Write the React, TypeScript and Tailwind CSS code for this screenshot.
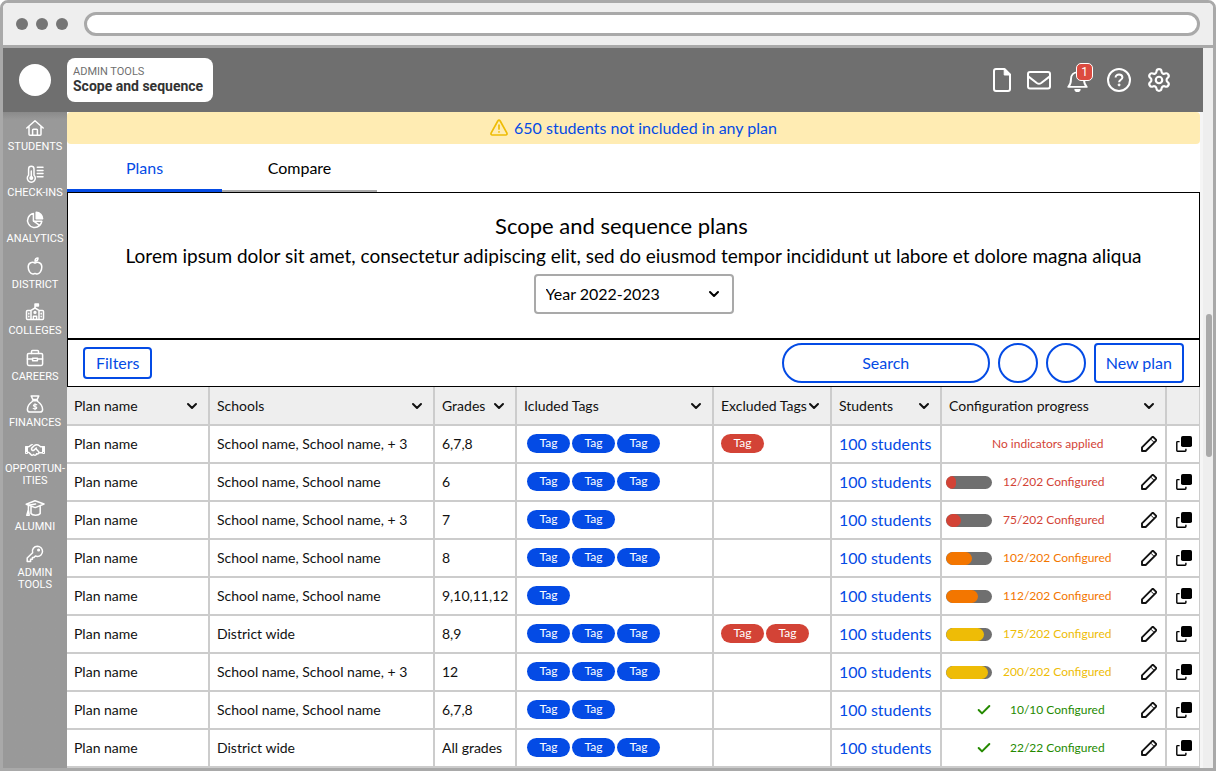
import type { ReactNode } from 'react';
import { Check, ChevronDown, Settings } from 'lucide-react';
import { FaRegHandshake } from 'react-icons/fa6';

type Progress = { label: string; tone: string; fill?: string; percent?: number; done?: boolean };

type Plan = {
  schools: string;
  grades: string;
  included: number;
  excluded: number;
  progress: Progress;
};

const RED = 'text-[#d34336]';
const ORANGE = 'text-[#f37600]';
const YELLOW = 'text-[#eebc06]';
const GREEN = 'text-[#258a00]';

const plans: Plan[] = [
  { schools: 'School name, School name, + 3', grades: '6,7,8', included: 3, excluded: 1, progress: { label: 'No indicators applied', tone: RED } },
  { schools: 'School name, School name', grades: '6', included: 3, excluded: 0, progress: { label: '12/202 Configured', tone: RED, fill: 'bg-[#d34336]', percent: 22 } },
  { schools: 'School name, School name, + 3', grades: '7', included: 2, excluded: 0, progress: { label: '75/202 Configured', tone: RED, fill: 'bg-[#d34336]', percent: 33 } },
  { schools: 'School name, School name', grades: '8', included: 3, excluded: 0, progress: { label: '102/202 Configured', tone: ORANGE, fill: 'bg-[#f37600]', percent: 57 } },
  { schools: 'School name, School name', grades: '9,10,11,12', included: 1, excluded: 0, progress: { label: '112/202 Configured', tone: ORANGE, fill: 'bg-[#f37600]', percent: 70 } },
  { schools: 'District wide', grades: '8,9', included: 3, excluded: 2, progress: { label: '175/202 Configured', tone: YELLOW, fill: 'bg-[#eebc06]', percent: 83 } },
  { schools: 'School name, School name, + 3', grades: '12', included: 3, excluded: 0, progress: { label: '200/202 Configured', tone: YELLOW, fill: 'bg-[#eebc06]', percent: 92 } },
  { schools: 'School name, School name', grades: '6,7,8', included: 2, excluded: 0, progress: { label: '10/10 Configured', tone: GREEN, done: true } },
  { schools: 'District wide', grades: 'All grades', included: 3, excluded: 0, progress: { label: '22/22 Configured', tone: GREEN, done: true } },
];

const columns = ['Plan name', 'Schools', 'Grades', 'Icluded Tags', 'Excluded Tags', 'Students', 'Configuration progress'];

const NavIcon = ({ children }: { children: ReactNode }) => (
  <svg className="h-[18px] w-5" viewBox="0 0 20 18" fill="none" stroke="currentColor" strokeWidth="1.5" strokeLinecap="round" strokeLinejoin="round" aria-hidden="true">
    {children}
  </svg>
);

const navItems = [
  {
    label: 'STUDENTS',
    icon: <NavIcon><path d="M1.8 9 10 1.8 18.2 9M4 7.4V15.2q0 1 1 1h10q1 0 1-1V7.4M7.6 16V11q0-.8.8-.8h3.2q.8 0 .8.8v5" /></NavIcon>,
  },
  {
    label: 'CHECK-INS',
    icon: (
      <NavIcon>
        <path d="M3.6 10.2V4a2.7 2.7 0 0 1 5.4 0v6.2a4 4 0 1 1-5.4 0Z" />
        <path d="M6.3 6v6" />
        <circle cx="6.3" cy="13" r="1.3" fill="currentColor" />
        <path d="M12.3 2.2H18M12.3 5.4H18M12.3 8.6H18M12.3 11.8H18" />
      </NavIcon>
    ),
  },
  {
    label: 'ANALYTICS',
    icon: (
      <NavIcon>
        <path d="M8.4 2.6A7 7 0 1 0 14.6 14.4L8.4 9.8Z" />
        <path d="M11.2 1.2a6.6 6.6 0 0 1 6.4 6.600h-6.400Z" fill="currentColor" />
        <path d="M8.600 10.300h8.200a7 7 0 0 1-2.200 4.100" />
      </NavIcon>
    ),
  },
  {
    label: 'DISTRICT',
    icon: (
      <NavIcon>
        <path d="M10 6.200C7.600 4.600 3.200 5.200 3.200 10c0 3.600 2.200 7 4.600 7 1 0 1.400-.5 2.200-.5s1.200.5 2.200.5c2.400 0 4.600-3.400 4.600-7 0-4.800-4.400-5.400-6.800-3.800Z" />
        <path d="M10 4.200c0-2 1-3.200 3-3.200 0 2-1.200 3.200-3 3.200Z" />
      </NavIcon>
    ),
  },
  {
    label: 'COLLEGES',
    icon: (
      <NavIcon>
        <path d="M10 5V1h3.400v1.900H10" fill="currentColor" />
        <path d="M6 7.400V16.400M14 7.400v9M6 7.400 10 5l4 2.400M6 7.400H2.500q-1 0-1 1v7q0 1 1 1h15q1 0 1-1v-7q0-1-1-1H14M8.400 16.400v-3.200h3.200v3.200" />
        <circle cx="10" cy="9.400" r=".9" />
        <path d="M3.800 10.300v.6M3.800 13.200v.6M16.200 10.300v.6M16.200 13.200v.6" />
      </NavIcon>
    ),
  },
  {
    label: 'CAREERS',
    icon: (
      <NavIcon>
        <rect x="2.400" y="4.400" width="15.200" height="12" rx="1.400" />
        <path d="M6.500 4.400V2.600q0-1 1-1h5q1 0 1 1v1.800M2.400 10h5.200M12.400 10h5.200M7.600 9.200h4.800v2.600H7.600Z" />
      </NavIcon>
    ),
  },
  {
    label: 'FINANCES',
    icon: (
      <NavIcon>
        <path d="M6.200 1h7.600l-1.600 3.400H7.800ZM7.400 5.800h5.200M7.800 6C4.800 8.200 2.400 11.400 2.400 14.400q0 2.600 2.800 2.600h9.600q2.800 0 2.800-2.600c0-3-2.400-6.200-5.400-8.400" />
        <path d="M11.800 9.800c-.8-.5-3.400-.7-3.400.7 0 1.500 3.400.8 3.400 2.300 0 1.400-2.600 1.300-3.600.6M10 8.600v6.200" strokeWidth="1.100" />
      </NavIcon>
    ),
  },
  { label: 'OPPORTUN-\nITIES', icon: <FaRegHandshake className="h-[18px] w-5" aria-hidden="true" /> },
  {
    label: 'ALUMNI',
    icon: (
      <NavIcon>
        <path d="m1.200 5.200 8.800-3.400 9 3.200-8.800 3.600ZM6 8v6.500c1.400 2.300 7.800 2.300 9.200 0V7.500" />
        <path d="M10.600 5 3.400 6.200v4.200M3.400 10.800l-1.600 5.400h2.400Z" />
      </NavIcon>
    ),
  },
  {
    label: 'ADMIN\nTOOLS',
    icon: (
      <NavIcon>
        <path d="M12.400 1.200a5.100 5.100 0 0 1 0 10.200c-.8 0-1.400-.1-2-.4L9 12.400H7.400v1.800H5.600V16.400H2.200V13l5.400-5.200a5.100 5.100 0 0 1 4.800-6.600Z" />
        <circle cx="13.600" cy="5" r=".8" fill="currentColor" />
      </NavIcon>
    ),
  },
];

const Pencil = () => (
  <svg className="size-4" viewBox="0 0 16 16" fill="none" stroke="#111" strokeWidth="1.900" strokeLinejoin="round" aria-hidden="true">
    <path d="M1 15v-3.700L11.200 1.100q.6-.5 1.200 0l2.500 2.500q.5.600 0 1.200L4.700 15Z" />
    <path d="m9.900 3.200 2.900 2.900" strokeWidth="1" />
  </svg>
);

const Copy = () => (
  <svg className="size-4" viewBox="0 0 16 16" aria-hidden="true">
    <path d="M3.600 5.600H1.500q-.7 0-.7.700v8.200q0 .7.700.7h7.600q.8 0 .8-.7v-1.700" fill="none" stroke="#000" strokeWidth="1.400" />
    <rect x="5" width="11" height="11" rx="1.800" />
  </svg>
);

const Tags = ({ count, color }: { count: number; color: string }) => (
  <div className="flex gap-[2px] pb-[2px]">
    {Array.from({ length: count }, (_, i) => (
      <span key={i} className={`flex h-[19px] w-[43px] items-center justify-center rounded-full text-xs text-white ${color}`}>
        Tag
      </span>
    ))}
  </div>
);

const ProgressCell = ({ progress }: { progress: Progress }) => (
  <div className="flex items-center pr-2 pl-1">
    <div className="flex w-[46px] shrink-0 justify-end">
      {progress.fill && (
        <div className="h-[13px] w-full overflow-hidden rounded-full bg-[#6f6f6f]">
          <div className={`h-full rounded-full ${progress.fill}`} style={{ width: `${progress.percent}%` }} />
        </div>
      )}
      {progress.done && <Check className="size-4 text-[#258a00]" strokeWidth={3} />}
    </div>
    <span className={`flex-1 text-xs whitespace-nowrap ${progress.fill ? 'pl-[11px]' : progress.done ? 'pl-[18px]' : ''} ${progress.tone}`}>
      {progress.label}
    </span>
    <button type="button" aria-label="Edit plan"><Pencil /></button>
  </div>
);

const TopBar = () => (
  <header className="z-10 flex h-16 shrink-0 items-center bg-[#6f6f6f] pr-[31px] pl-4 text-white">
    <div className="size-8 rounded-full bg-white" />
    <div className="ml-4 flex h-11 flex-col justify-center rounded-lg bg-white pr-[10px] pl-[6px] font-['Roboto',sans-serif]">
      <p className="text-[11px] leading-3 text-[#6f6f6f]">ADMIN TOOLS</p>
      <h1 className="text-sm leading-4 font-bold text-[#333]">Scope and sequence</h1>
    </div>
    <div className="ml-auto flex items-center gap-4">
      <button type="button" aria-label="Documents">
        <svg className="h-6 w-[18px]" viewBox="0 0 18 24" fill="none" stroke="currentColor" strokeWidth="2" strokeLinejoin="round" aria-hidden="true">
          <path d="M3 1h8.500L17 6.500V21q0 2-2 2H3q-2 0-2-2V3q0-2 2-2Z" />
          <path d="M11.200 1v6H17Z" fill="currentColor" strokeWidth="1" />
        </svg>
      </button>
      <button type="button" aria-label="Messages">
        <svg className="size-6" viewBox="0 0 24 24" fill="none" stroke="currentColor" strokeWidth="2" strokeLinejoin="round" aria-hidden="true">
          <rect x="1" y="4" width="22" height="16.500" rx="2" />
          <path d="M1.200 8.400 9.800 15q2.200 1.500 4.400 0l8.600-6.600" />
        </svg>
      </button>
      <button type="button" aria-label="Notifications" className="relative">
        <svg className="size-6" viewBox="0 0 24 24" aria-hidden="true">
          <path d="M1.300 18.900h18.400c-2.400-2.500-2.700-4-2.700-8 0-4-2.600-6.500-6.500-6.500S4 7 4 11c0 3.900-.3 5.500-2.700 7.900Z" fill="none" stroke="currentColor" strokeWidth="1.900" strokeLinejoin="round" />
          <path d="M7.300 21h6.400a3.200 3.200 0 0 1-6.400 0Z" fill="currentColor" />
        </svg>
        <span className="absolute -top-[5px] left-[9px] flex h-[18px] w-[17px] items-center justify-center rounded-[5px] border border-white bg-[#dc4b40] font-['Roboto',sans-serif] text-xs">1</span>
      </button>
      <button type="button" aria-label="Help">
        <svg className="size-6" viewBox="0 0 24 24" fill="none" stroke="currentColor" strokeWidth="2" aria-hidden="true">
          <circle cx="12" cy="12" r="11" />
          <path d="M8.600 9.400c0-3.800 6.800-3.700 6.800 0 0 2.300-3.300 2.400-3.300 4.800" />
          <circle cx="12.100" cy="16.900" r="1" fill="currentColor" strokeWidth="1" />
        </svg>
      </button>
      <button type="button" aria-label="Settings" className="-ml-px"><Settings className="size-[26px]" strokeWidth={2} /></button>
    </div>
  </header>
);

const Sidebar = () => (
  <nav className="w-16 shrink-0 bg-[#999] bg-linear-to-b from-[#8a8a8a] to-[#999] to-[8px] pt-[7px] font-['Roboto',sans-serif] text-white">
    {navItems.map((item) => (
      <a key={item.label} href="#" className="mb-3 flex flex-col items-center">
        {item.icon}
        <span className="mt-1 text-center text-[11px] leading-3 whitespace-pre">{item.label}</span>
      </a>
    ))}
  </nav>
);

const PlansTable = () => (
  <table className="w-full table-fixed border-separate border-spacing-0 text-sm text-[#111]">
    <colgroup>
      <col className="w-[143px]" />
      <col />
      <col className="w-[82px]" />
      <col className="w-[197px]" />
      <col className="w-[118px]" />
      <col className="w-[110px]" />
      <col className="w-[225px]" />
      <col className="w-[33px]" />
    </colgroup>
    <thead>
      <tr className="h-[39px] bg-[#eee]">
        {columns.map((name) => (
          <th key={name} scope="col" className="border-r-2 border-b-2 border-[#ccc] p-0 text-left font-normal">
            <button type="button" className="flex w-full items-center justify-between pr-2 pl-[7px] whitespace-nowrap">
              {name}
              <ChevronDown className="-ml-1 size-4 shrink-0" strokeWidth={3} />
            </button>
          </th>
        ))}
        <th className="border-r border-b-2 border-[#ccc] p-0" aria-label="Duplicate" />
      </tr>
    </thead>
    <tbody className="[&_td]:border-r-2 [&_td]:border-b-2 [&_td]:border-[#ccc] [&_td]:p-0">
      {plans.map((plan, i) => (
        <tr key={i} className="h-[38px] whitespace-nowrap">
          <td><span className="pl-[7px]">Plan name</span></td>
          <td><span className="pl-[7px]">{plan.schools}</span></td>
          <td><span className="pl-[7px]">{plan.grades}</span></td>
          <td><div className="pl-[10px]"><Tags count={plan.included} color="bg-[#044be5]" /></div></td>
          <td><div className="pl-[7px]"><Tags count={plan.excluded} color="bg-[#d34336]" /></div></td>
          <td><a href="#" className="pl-[7px] text-base text-[#044be5]">100 students</a></td>
          <td><ProgressCell progress={plan.progress} /></td>
          <td className="border-r!">
            <button type="button" aria-label="Duplicate plan" className="ml-[9px] flex"><Copy /></button>
          </td>
        </tr>
      ))}
    </tbody>
  </table>
);

const App = () => {
  return (
    <div className="flex h-screen flex-col overflow-hidden rounded-t-lg border-3 border-[#a9a9a9] bg-white font-['Lato',sans-serif] text-black">
      {/* Browser chrome */}
      <div className="flex h-[45px] shrink-0 items-center gap-2 border-b-3 border-[#a9a9a9] bg-[#eee] pr-[13px] pl-[13px]">
        <span className="size-3 rounded-full bg-[#757575]" />
        <span className="size-3 rounded-full bg-[#757575]" />
        <span className="size-3 rounded-full bg-[#757575]" />
        <input type="text" aria-label="Address" className="ml-2 h-6 flex-1 rounded-full border-3 border-[#a9a9a9] bg-white px-3 text-xs outline-none" />
      </div>

      <div className="flex min-h-0 flex-1">
        <div className="flex min-w-0 flex-1 flex-col">
          <TopBar />
          <div className="flex min-h-0 flex-1 bg-[#f5f5f5] pr-[3px]">
            <Sidebar />
            <main className="min-w-0 flex-1 bg-white">
              <div className="flex h-8 items-center justify-center gap-[6px] rounded-sm bg-[#ffecb3]">
                <svg className="size-[18px]" viewBox="0 0 18 18" fill="none" stroke="#eebc06" strokeWidth="1.700" strokeLinejoin="round" strokeLinecap="round" aria-hidden="true">
                  <path d="M7.800 2q1.200-1.600 2.400 0l6.600 11.800q.8 2-1.200 2.200H2.400q-2-.2-1.200-2.200Z" />
                  <path d="M9 6v4M9 12.800v.1" />
                </svg>
                <a href="#" className="text-base text-[#044be5]">650 students not included in any plan</a>
              </div>

              <div className="flex h-12">
                <button type="button" className="w-[155px] border-b-3 border-[#044be5] pt-[3px] text-[#044be5]">Plans</button>
                <button type="button" className="w-[155px] border-b-2 border-[#a9a9a9] pt-[2px]">Compare</button>
              </div>

              <section className="flex flex-col items-center border border-black pt-[19px] pb-6">
                <h2 className="pr-6 text-[22px] leading-7">Scope and sequence plans</h2>
                <p className="mt-1 text-[19px] leading-6">
                  Lorem ipsum dolor sit amet, consectetur adipiscing elit, sed do eiusmod tempor incididunt ut labore et dolore magna aliqua
                </p>
                <div className="relative mt-[6px]">
                  <select aria-label="School year" className="h-10 w-[200px] appearance-none rounded-sm border-2 border-[#a9a9a9] bg-white px-[10px] text-base">
                    <option>Year 2022-2023</option>
                  </select>
                  <ChevronDown className="pointer-events-none absolute top-3 right-3 size-4" strokeWidth={3} />
                </div>
              </section>

              <section className="flex h-12 items-center border border-black px-[15px] text-base text-[#044be5]">
                <button type="button" className="h-8 rounded-sm border-2 border-[#044be5] px-[11px]">Filters</button>
                <div className="ml-auto flex gap-2">
                  <button type="button" className="h-10 w-52 rounded-full border-2 border-[#044be5]">Search</button>
                  <button type="button" aria-label="Action 1" className="size-10 rounded-full border-2 border-[#044be5]" />
                  <button type="button" aria-label="Action 2" className="size-10 rounded-full border-2 border-[#044be5]" />
                  <button type="button" className="h-10 rounded-sm border-2 border-[#044be5] px-[10px]">New plan</button>
                </div>
              </section>

              <PlansTable />
            </main>
          </div>
        </div>

        {/* Scrollbar */}
        <div className="w-[10px] shrink-0 bg-[#eee] pt-[266px] pl-[3px]">
          <div className="h-[143px] w-[6px] rounded-full bg-[#a9a9a9]" />
        </div>
      </div>
    </div>
  );
};

export default App;
